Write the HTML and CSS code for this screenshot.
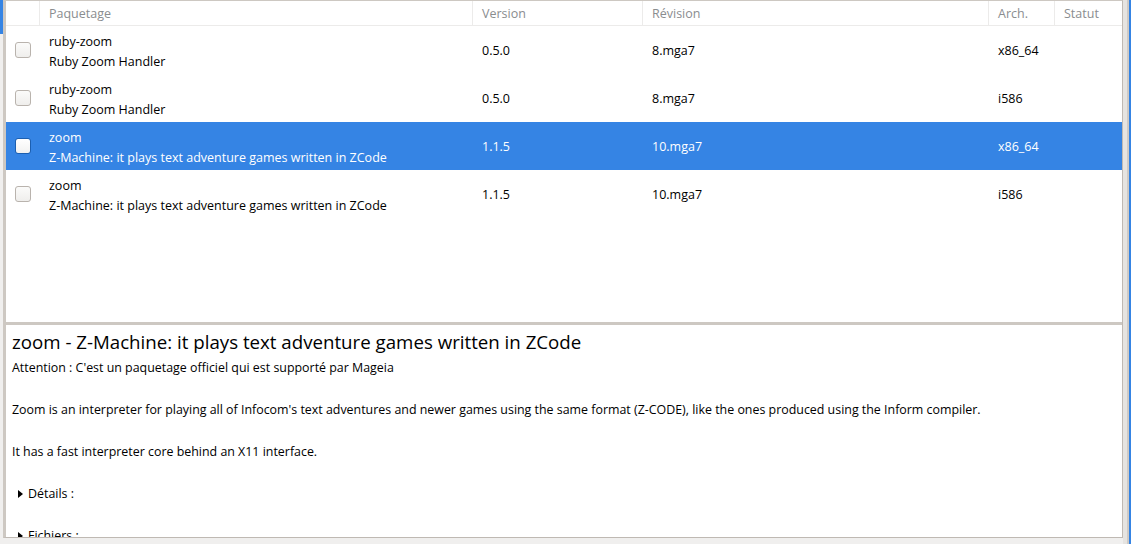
FILE: index.html
```html
<!DOCTYPE html>
<html>
<head>
<meta charset="utf-8">
<link rel="stylesheet" href="styles.css">
</head>
<body>
<div class="app">
  <div class="leftstrip"><div class="focus"></div></div>
  <div class="frame">
    <div class="list">
      <div class="row header">
        <div class="cell chk"></div>
        <div class="cell">Paquetage</div>
        <div class="cell">Version</div>
        <div class="cell">Révision</div>
        <div class="cell">Arch.</div>
        <div class="cell">Statut</div>
      </div>
      <div class="row item">
        <div class="cell chk"><span class="box"></span></div>
        <div class="cell name"><span>ruby-zoom</span><span>Ruby Zoom Handler</span></div>
        <div class="cell">0.5.0</div>
        <div class="cell">8.mga7</div>
        <div class="cell">x86_64</div>
        <div class="cell"></div>
      </div>
      <div class="row item">
        <div class="cell chk"><span class="box"></span></div>
        <div class="cell name"><span>ruby-zoom</span><span>Ruby Zoom Handler</span></div>
        <div class="cell">0.5.0</div>
        <div class="cell">8.mga7</div>
        <div class="cell">i586</div>
        <div class="cell"></div>
      </div>
      <div class="row item selected">
        <div class="cell chk"><span class="box"></span></div>
        <div class="cell name"><span>zoom</span><span>Z-Machine: it plays text adventure games written in ZCode</span></div>
        <div class="cell">1.1.5</div>
        <div class="cell">10.mga7</div>
        <div class="cell">x86_64</div>
        <div class="cell"></div>
      </div>
      <div class="row item">
        <div class="cell chk"><span class="box"></span></div>
        <div class="cell name"><span>zoom</span><span>Z-Machine: it plays text adventure games written in ZCode</span></div>
        <div class="cell">1.1.5</div>
        <div class="cell">10.mga7</div>
        <div class="cell">i586</div>
        <div class="cell"></div>
      </div>
    </div>
    <div class="divider"></div>
    <div class="detail">
      <h1 class="title">zoom - Z-Machine: it plays text adventure games written in ZCode</h1>
      <p class="line">Attention : C'est un paquetage officiel qui est supporté par Mageia</p>
      <p class="line gap">Zoom is an interpreter for playing all of Infocom's text adventures and newer games using the same format (Z-CODE), like the ones produced using the Inform compiler.</p>
      <p class="line gap">It has a fast interpreter core behind an X11 interface.</p>
      <p class="line gap expander"><span class="tri"></span>Détails :</p>
      <p class="line gap expander"><span class="tri"></span>Fichiers :</p>
    </div>
  </div>
  <div class="rightstrip"><div class="rs-inner"></div><div class="rs-blue"></div></div>
</div>
</body>
</html>
```

FILE: styles.css
```css
html, body {
  margin: 0;
  padding: 0;
  background: #f0efee;
  width: 1131px;
  height: 544px;
  overflow: hidden;
  font-family: "Open Sans", "Noto Sans", sans-serif;
  color: #000;
}
.app {
  display: flex;
  height: 544px;
}
.leftstrip {
  width: 3px;
  background: #f0efee;
}
.focus {
  height: 34px;
  background: #3584e4;
}
.frame {
  width: 1116px;
  height: 536px;
  border-left: 3px solid #cdc8c2;
  border-top: 1px solid #cdc8c2;
  border-right: 1px solid #bfb9b3;
  border-bottom: 1px solid #bfb9b3;
  background: #fff;
  display: flex;
  flex-direction: column;
  overflow: hidden;
}
.list {
  height: 321px;
  background: #fff;
}
.row {
  display: grid;
  grid-template-columns: 33px 433px 170px 346px 66px 1fr;
}
.header {
  height: 24px;
  border-bottom: 1px solid #ecebea;
  font-size: 12.5px;
  color: #8a8d8f;
}
.header .cell {
  border-left: 1px solid #ecebea;
  padding-left: 9px;
  display: flex;
  align-items: center;
}
.header .cell:first-child {
  border-left: none;
}
.item {
  height: 48px;
  font-size: 12.5px;
}
.item .cell {
  padding-left: 10px;
  display: flex;
  align-items: center;
}
.item .cell.chk {
  padding-left: 9px;
}
.item .name {
  flex-direction: column;
  align-items: flex-start;
  justify-content: flex-start;
  padding-top: 6px;
}
.item .name span {
  line-height: 20px;
}
.box {
  display: block;
  width: 14px;
  height: 14px;
  border: 1px solid #b9b3ad;
  border-radius: 3px;
  background: linear-gradient(#fbfbfa, #efeeec);
}
.selected {
  background: #3584e4;
  color: #fff;
}
.selected .box {
  border-color: #1c5fb0;
  background: linear-gradient(#ffffff, #f2f2f1);
}
.divider {
  height: 3px;
  background: #cdc8c2;
  flex: none;
}
.detail {
  flex: 1;
  padding: 5px 6px 0 6px;
  overflow: hidden;
}
.title {
  margin: 0 0 5px 0;
  font-weight: normal;
  font-size: 18.7px;
  line-height: 24px;
}
.line {
  margin: 0;
  font-size: 12.42px;
  line-height: 18px;
}
.gap {
  margin-top: 24px;
}
.expander {
  display: flex;
  align-items: center;
  padding-left: 6px;
}
.tri {
  width: 0;
  height: 0;
  border-top: 4px solid transparent;
  border-bottom: 4px solid transparent;
  border-left: 5px solid #000;
  margin-right: 5px;
}
.rightstrip {
  flex: 1;
  display: flex;
  height: 544px;
}
.rs-inner {
  width: 4px;
  background: #e6e4e1;
  border-right: 2px solid #cfcac5;
}
.rs-blue {
  flex: 1;
  background: #3584e4;
}
```
